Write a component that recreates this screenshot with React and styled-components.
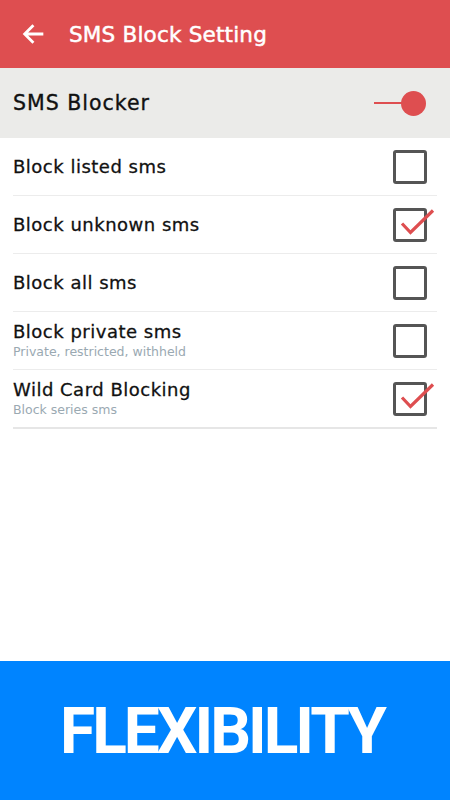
import React from "react";
import styled, { createGlobalStyle } from "styled-components";

const Global = createGlobalStyle`
  html, body { margin: 0; padding: 0; background: #fff; }
  body { font-family: "DejaVu Sans", "Open Sans", sans-serif; }
`;

const Page_ = styled.div`
  width: 450px;
  height: 800px;
  display: flex;
  flex-direction: column;
  background: #fff;
  overflow: hidden;
`;
const Header_ = styled.div`
  height: 68px;
  background-color: #de4e50;
  display: flex;
  align-items: center;
  padding-left: 20px;
  gap: 21px;
  color: #fff;
  flex-shrink: 0;
`;
const Title_ = styled.div`
  font-size: 21.5px;
  letter-spacing: 0.2px;
  padding-top: 1px;
  -webkit-text-stroke: 0.5px #fff;
`;
const Master_ = styled.div`
  height: 70px;
  background-color: #ebebe9;
  display: flex;
  align-items: center;
  justify-content: space-between;
  padding: 0 24px 0 13px;
  flex-shrink: 0;
`;
const MasterLabel_ = styled.div`
  font-size: 20.5px;
  letter-spacing: 1px;
  color: #111;
  -webkit-text-stroke: 0.35px #111;
`;
const Toggle_ = styled.div`
  display: flex;
  align-items: center;
  width: 52px;
  height: 25px;
`;
const Track_ = styled.div`
  width: 30px;
  height: 2px;
  background: #de4e50;
`;
const Knob_ = styled.div`
  width: 25px;
  height: 25px;
  border-radius: 50%;
  background: #de4e50;
  margin-left: -3px;
`;
const List_ = styled.div`
  padding: 0 13px;
  display: flex;
  flex-direction: column;
`;
const Row_ = styled.div`
  height: 57px;
  display: flex;
  align-items: center;
  justify-content: space-between;
  border-bottom: ${(p) => (p.$last ? "2px solid #e6e6e6" : "1px solid #ececec")};
  padding-right: 10px;
`;
const Texts_ = styled.div`
  display: flex;
  flex-direction: column;
`;
const Label_ = styled.div`
  font-size: 18px;
  letter-spacing: 0.5px;
  color: #111;
  line-height: 22px;
  -webkit-text-stroke: 0.3px #111;
`;
const Sub_ = styled.div`
  font-size: 12.5px;
  color: #9aa9b2;
  line-height: 17px;
`;
const Box_ = styled.div`
  position: relative;
  width: 28px;
  height: 28px;
  border: 3px solid #555;
  border-radius: 3px;
`;
const Check_ = styled.svg`
  position: absolute;
  left: -3px;
  top: -3px;
  overflow: visible;
`;
const Spacer_ = styled.div`
  flex: 1;
`;
const Footer_ = styled.div`
  height: 139px;
  background-color: #0084ff;
  display: flex;
  align-items: center;
  justify-content: center;
  flex-shrink: 0;
`;
const Big_ = styled.div`
  font-family: Roboto, "Liberation Sans", sans-serif;
  font-weight: 700;
  font-size: 64px;
  letter-spacing: -3px;
  color: #fff;
  margin-left: -6px;
  padding-top: 2px;
`;

function Checkbox({ checked }) {
  return (
    <Box_>
      {checked && (
        <Check_ width="34" height="34" viewBox="0 0 34 34">
          <path d="M9 15.5 L17.5 24.5 L40 2.5" fill="none" stroke="#de4e50" strokeWidth="3.2" />
        </Check_>
      )}
    </Box_>
  );
}

const rows = [
  { label: "Block listed sms", checked: false },
  { label: "Block unknown sms", checked: true },
  { label: "Block all sms", checked: false },
  { label: "Block private sms", sub: "Private, restricted, withheld", checked: false },
  { label: "Wild Card Blocking", sub: "Block series sms", checked: true },
];

export default function App() {
  return (
    <Page_>
      <Global />
      <Header_>
        <svg width="28" height="28" viewBox="0 0 24 24">
          <path d="M20 12H4.5M11.5 4.5L4 12l7.5 7.5" fill="none" stroke="#fff" strokeWidth="2.4" />
        </svg>
        <Title_>SMS Block Setting</Title_>
      </Header_>
      <Master_>
        <MasterLabel_>SMS Blocker</MasterLabel_>
        <Toggle_>
          <Track_ />
          <Knob_ />
        </Toggle_>
      </Master_>
      <List_>
        {rows.map((r, i) => (
          <Row_ key={r.label} $last={i === rows.length - 1}>
            <Texts_>
              <Label_>{r.label}</Label_>
              {r.sub && <Sub_>{r.sub}</Sub_>}
            </Texts_>
            <Checkbox checked={r.checked} />
          </Row_>
        ))}
      </List_>
      <Spacer_ />
      <Footer_>
        <Big_>FLEXIBILITY</Big_>
      </Footer_>
    </Page_>
  );
}
